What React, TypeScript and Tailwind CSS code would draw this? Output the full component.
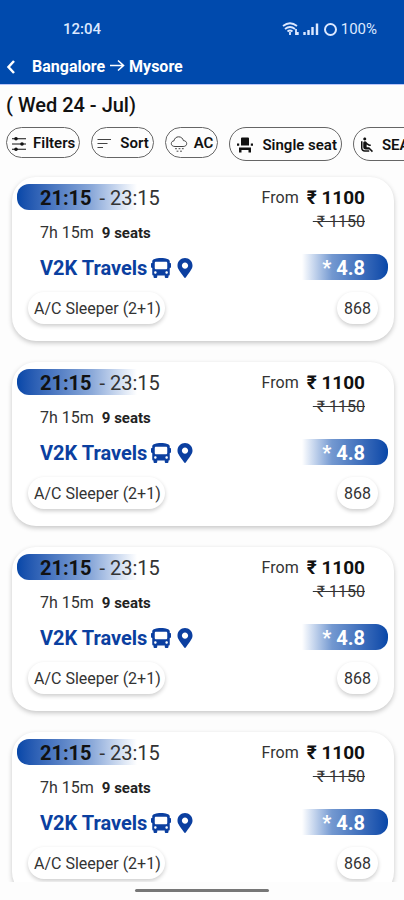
import React from "react";
import { MdAirlineSeatReclineNormal } from "react-icons/md";
import { FaBus, FaMapMarkerAlt } from "react-icons/fa";

const FiltersIcon = () => (
  <svg viewBox="0 0 16 16" className="h-4 w-4 shrink-0" fill="currentColor" aria-hidden="true">
    <path d="M1 2.300h14v1H1zM1 7.500h14v1H1zM1 12.700h14v1H1z" />
    <circle cx="5" cy="2.800" r="1.800" />
    <circle cx="11" cy="8" r="1.800" />
    <circle cx="5" cy="13.200" r="1.800" />
  </svg>
);

const SortIcon = () => (
  <svg viewBox="0 0 18 16" className="h-4 w-[18px] shrink-0" fill="none" stroke="#444" strokeWidth="1.200" aria-hidden="true">
    <path d="M1.500 3.500h13.500M1.500 7.500h10M1.500 11.500h5.500" />
  </svg>
);

const CloudIcon = () => (
  <svg viewBox="0 0 18 18" className="h-[18px] w-[18px] shrink-0" fill="none" stroke="#444" strokeLinecap="round" aria-hidden="true">
    <path d="M4.600 11.500C2.600 11.500 1.300 10.200 1.300 8.600 1.300 7 2.500 5.900 4 5.800 4.400 3.400 6.300 1.800 8.600 1.800c2.500 0 4.300 1.600 4.800 3.800 2 .1 3.300 1.300 3.300 3 0 1.700-1.300 2.900-3.200 2.900z" />
    <path d="M5.500 13.700h1M9 13.700h1M12.300 13.700h1M7 16.200h1M10.500 16.200h1" />
  </svg>
);

const SeatIcon = () => (
  <svg viewBox="0 0 18 16" className="h-4 w-[18px] shrink-0" fill="currentColor" aria-hidden="true">
    <path d="M5 1.500Q5 .5 6 .5h6q1 0 1 1V8.500H5zM1 6.500h2.200v2.200H1zM14.800 6.500H17v2.200h-2.200zM3 10.500h12v5h-2.500V13h-7v2.500H3z" />
  </svg>
);

const filters = [
  { label: "Filters", icon: <FiltersIcon />, style: "h-[31px] px-1 gap-1.5" },
  { label: "Sort", icon: <SortIcon />, style: "h-[31px] px-1 gap-1.5" },
  { label: "AC", icon: <CloudIcon />, style: "h-[31px] px-1 gap-1.5" },
  { label: "Single seat", icon: <SeatIcon />, style: "h-[34px] pl-1.5 pr-1 gap-2" },
  { label: "SEATER", icon: <MdAirlineSeatReclineNormal className="h-[18px] w-[18px]" aria-hidden="true" />, style: "h-[34px] pl-1 pr-2 gap-1.5" },
];

const trips = [1, 2, 3, 4];

function TripCard() {
  return (
    <article className="h-[164px] shrink-0 rounded-3xl bg-white pl-[5px] pr-[6px] pt-[7px] shadow-[0_2px_5px_rgba(0,0,0,0.22)]">
      <div className="flex justify-between">
        <div>
          <p className="flex h-[26px] w-[150px] items-center gap-2 rounded-l-xl bg-linear-to-r from-[#0647a8] via-[#8ba9d9] via-50% to-white to-80% pl-[23px] pt-0.5 text-xl text-[#333]">
            <b className="font-bold text-[#111]">21:15</b>
            <span className="whitespace-nowrap">- 23:15</span>
          </p>
          <p className="mt-[13px] flex gap-2 pl-[23px] text-base leading-5 text-[#333]">
            <span>7h 15m</span>
            <b className="text-[15px] font-bold text-[#222]">9 seats</b>
          </p>
        </div>
        <div className="flex flex-col items-end pr-[23px] text-[#333]">
          <p className="flex h-[26px] items-center gap-2 pt-0.5 text-base">
            From <b className="text-[19px] font-bold text-[#111]">₹ 1100</b>
          </p>
          <s className="mt-0.5 text-base leading-5">&nbsp;₹ 1150</s>
        </div>
      </div>
      <div className="mt-[11px] flex h-[26px] items-center justify-between pl-[23px]">
        <h2 className="flex items-center gap-1 pt-0.5 text-xl font-bold text-[#0b3fa0]">
          V2K Travels
          <FaBus className="h-5 w-5" aria-hidden="true" />
          <FaMapMarkerAlt className="h-5 w-5" aria-hidden="true" />
        </h2>
        <span className="flex h-[26px] w-[86px] items-center justify-end rounded-r-xl bg-linear-to-r from-white via-[#7398d0] via-35% to-[#0647a8] pr-[23px] pt-0.5 text-xl font-bold text-white">
          * 4.8
        </span>
      </div>
      <div className="mt-3 flex justify-between pl-[11px] pr-[10px] text-base text-[#333]">
        <span className="flex h-8 items-center rounded-full bg-white pl-1.5 pr-1 pt-0.5 shadow-[0_2px_4px_rgba(0,0,0,0.2)]">A/C Sleeper (2+1)</span>
        <span className="flex h-8 items-center rounded-full bg-white px-[7px] pt-0.5 shadow-[0_2px_4px_rgba(0,0,0,0.2)]">868</span>
      </div>
    </article>
  );
}

export default function App() {
  return (
    <div className="flex h-dvh flex-col overflow-hidden bg-[#fdfdfd] font-['Roboto',sans-serif] text-[#111]">
      <header className="h-[85px] shrink-0 border-b border-[#b9c5fa] bg-[#004aad] text-white">
        <div className="flex items-center justify-between pl-[63px] pr-[27px] pt-[19px] text-[15px] leading-5 text-[#dce8ff]">
          <time className="font-medium">12:04</time>
          <div className="flex items-center gap-1">
            <svg viewBox="0 0 38 16" className="h-4 w-[38px]" fill="none" stroke="currentColor" strokeWidth="1.800" aria-hidden="true">
              <path d="M1 5Q8 -.5 15 5M3 8q5-4 10 0M5.500 10.500q2.500-2 5 0" />
              <path d="M8 11v3M14 8v6M15.800 11v3" />
              <path d="M22.500 11v3M26.500 9v5M30.500 6v8M35 2.500v11.500" strokeWidth="2.400" />
            </svg>
            <span className="h-[13px] w-[13px] rounded-full border-2 border-current" />
            <span>100%</span>
          </div>
        </div>
        <div className="mt-[18px] flex items-center">
          <button type="button" aria-label="Back" className="flex w-8 pl-1.5">
            <svg viewBox="0 0 10 16" className="h-4 w-2.5" fill="none" stroke="currentColor" strokeWidth="2.500" aria-hidden="true">
              <path d="M8 2 2.500 8 8 14" />
            </svg>
          </button>
          <h1 className="flex items-center gap-1 text-base leading-5 font-bold">
            Bangalore
            <svg viewBox="0 0 16 16" className="h-4 w-4" fill="none" stroke="currentColor" strokeWidth="1.600" aria-hidden="true">
              <path d="M1 6.500h13M9 1.500l5.500 5L9 11.500" />
            </svg>
            Mysore
          </h1>
        </div>
      </header>
      <main className="flex min-h-0 flex-1 flex-col">
        <p className="px-1.5 pt-1.5 text-xl leading-7 font-medium">( Wed 24 - Jul)</p>
        <div className="flex shrink-0 items-start gap-[11px] overflow-x-auto px-1.5 pt-2 [scrollbar-width:none]">
          {filters.map((f) => (
            <button key={f.label} type="button" className={"flex shrink-0 items-center rounded-full border border-[#666] pt-0.5 text-[15px] font-semibold whitespace-nowrap " + f.style}>
              {f.icon}
              {f.label}
            </button>
          ))}
        </div>
        <section className="mt-2 flex min-h-0 flex-1 flex-col gap-[21px] overflow-y-auto pl-3 pr-2.5 pt-2 [scrollbar-width:none]">
          {trips.map((id) => (
            <TripCard key={id} />
          ))}
        </section>
      </main>
      <footer className="flex h-[18px] shrink-0 justify-center pt-[7px]">
        <span className="h-[3px] w-1/3 rounded-full bg-[#777]" />
      </footer>
    </div>
  );
}
